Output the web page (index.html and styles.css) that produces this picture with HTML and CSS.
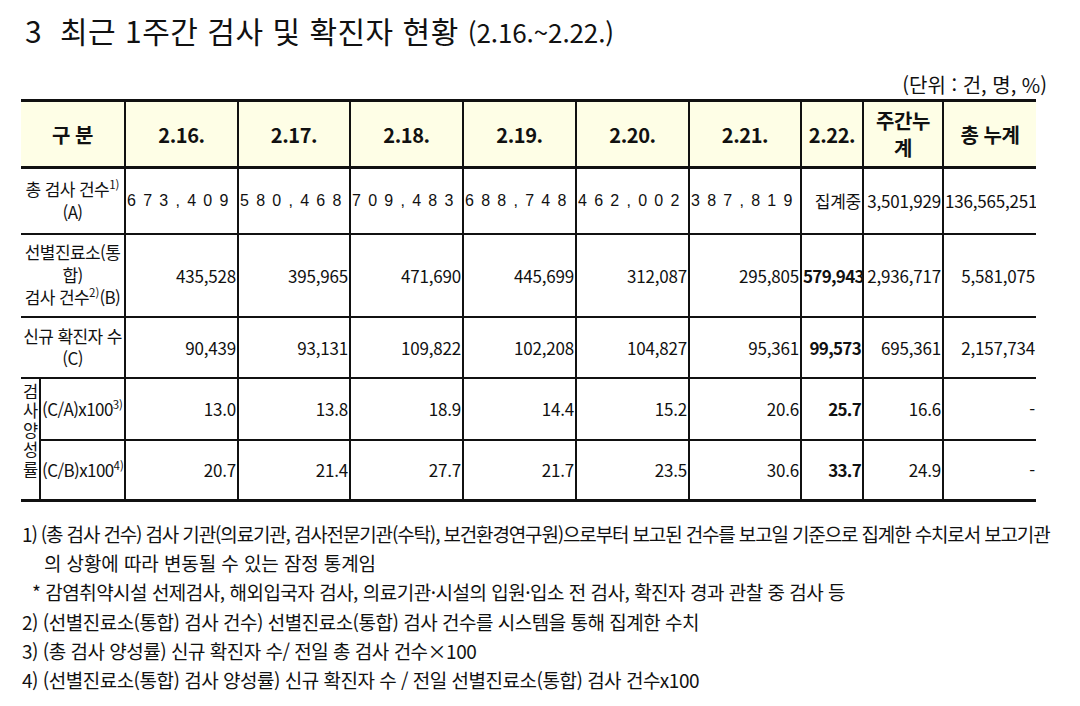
FILE: index.html
```html
<!DOCTYPE html>
<html lang="ko">
<head>
<meta charset="utf-8">
<link rel="stylesheet" href="styles.css">
</head>
<body>
<div class="page">
  <h1 class="title">3&nbsp; 최근 1주간 검사 및 확진자 현황 <span class="title-sub">(2.16.~2.22.)</span></h1>
  <div class="unit">(단위 : 건, 명, %)</div>
  <table class="stats">
    <colgroup>
      <col class="c-a"><col class="c-b"><col class="c-d"><col class="c-d2"><col class="c-d"><col class="c-d"><col class="c-d"><col class="c-d2"><col class="c-e"><col class="c-f"><col class="c-g">
    </colgroup>
    <thead>
      <tr class="r-head">
        <th colspan="2">구 분</th>
        <th>2.16.</th><th>2.17.</th><th>2.18.</th><th>2.19.</th><th>2.20.</th><th>2.21.</th><th>2.22.</th>
        <th class="wrap">주간누<br>계</th>
        <th>총 누계</th>
      </tr>
    </thead>
    <tbody>
      <tr class="r1">
        <td colspan="2" class="label">총 검사 건수<sup>1)</sup><br>(A)</td>
        <td class="spread">6 7 3 , 4 0 9</td>
        <td class="spread">5 8 0 , 4 6 8</td>
        <td class="spread">7 0 9 , 4 8 3</td>
        <td class="spread">6 8 8 , 7 4 8</td>
        <td class="spread">4 6 2 , 0 0 2</td>
        <td class="spread">3 8 7 , 8 1 9</td>
        <td class="num">집계중</td>
        <td class="num">3,501,929</td>
        <td class="num">136,565,251</td>
      </tr>
      <tr class="r2">
        <td colspan="2" class="label">선별진료소(통<br>합)<br>검사 건수<sup>2)</sup>(B)</td>
        <td class="num">435,528</td>
        <td class="num">395,965</td>
        <td class="num">471,690</td>
        <td class="num">445,699</td>
        <td class="num">312,087</td>
        <td class="num">295,805</td>
        <td class="num bold">579,943</td>
        <td class="num">2,936,717</td>
        <td class="num">5,581,075</td>
      </tr>
      <tr class="r3">
        <td colspan="2" class="label">신규 확진자 수<br>(C)</td>
        <td class="num">90,439</td>
        <td class="num">93,131</td>
        <td class="num">109,822</td>
        <td class="num">102,208</td>
        <td class="num">104,827</td>
        <td class="num">95,361</td>
        <td class="num bold">99,573</td>
        <td class="num">695,361</td>
        <td class="num">2,157,734</td>
      </tr>
      <tr class="r4">
        <td rowspan="2" class="vlabel"><span class="vtext">검사양성률</span></td>
        <td class="sub">(C/A)x100<sup>3)</sup></td>
        <td class="num">13.0</td>
        <td class="num">13.8</td>
        <td class="num">18.9</td>
        <td class="num">14.4</td>
        <td class="num">15.2</td>
        <td class="num">20.6</td>
        <td class="num bold">25.7</td>
        <td class="num">16.6</td>
        <td class="num">-</td>
      </tr>
      <tr class="r5">
        <td class="sub">(C/B)x100<sup>4)</sup></td>
        <td class="num">20.7</td>
        <td class="num">21.4</td>
        <td class="num">27.7</td>
        <td class="num">21.7</td>
        <td class="num">23.5</td>
        <td class="num">30.6</td>
        <td class="num bold">33.7</td>
        <td class="num">24.9</td>
        <td class="num">-</td>
      </tr>
    </tbody>
  </table>
  <ol class="notes">
    <li class="tight">1) (총 검사 건수) 검사 기관(의료기관, 검사전문기관(수탁), 보건환경연구원)으로부터 보고된 건수를 보고일 기준으로 집계한 수치로서 보고기관</li>
    <li class="indent">의 상황에 따라 변동될 수 있는 잠정 통계임</li>
    <li class="star">* 감염취약시설 선제검사, 해외입국자 검사, 의료기관·시설의 입원·입소 전 검사, 확진자 경과 관찰 중 검사 등</li>
    <li>2) (선별진료소(통합) 검사 건수) 선별진료소(통합) 검사 건수를 시스템을 통해 집계한 수치</li>
    <li>3) (총 검사 양성률) 신규 확진자 수/ 전일 총 검사 건수×100</li>
    <li>4) (선별진료소(통합) 검사 양성률) 신규 확진자 수 / 전일 선별진료소(통합) 검사 건수x100</li>
  </ol>
</div>
</body>
</html>
```
FILE: styles.css
```css
* { box-sizing: border-box; }
html, body { margin: 0; padding: 0; background: #fff; }
body {
  font-family: "Noto Sans CJK KR", "Noto Sans", sans-serif;
  color: #111;
}
.page {
  width: 1080px;
  height: 706px;
  padding: 11px 0 0 21px;
  overflow: hidden;
}
.title {
  margin: 0 0 0 4px;
  font-size: 30px;
  font-weight: 400;
  line-height: 38px;
  letter-spacing: 0.5px;
}
.title-sub { font-size: 26px; letter-spacing: -0.1px; }
.unit {
  width: 1026px;
  text-align: right;
  font-size: 20px;
  line-height: 28px;
  margin-top: 20px;
  letter-spacing: 0;
}
.stats {
  width: 1015px;
  table-layout: fixed;
  border-collapse: collapse;
  margin-top: 0;
  font-size: 17px;
}
.c-a { width: 19px; }
.c-b { width: 85px; }
.c-d { width: 113px; }
.c-d2 { width: 112px; }
.c-e { width: 62px; }
.c-f { width: 80px; }
.c-g { width: 93px; }
.stats th, .stats td {
  border: 2px solid #111;
  padding: 0 1px;
  overflow: hidden;
  white-space: nowrap;
}
.stats tr > :first-child { border-left: none; }
.stats tr > :last-child { border-right: none; }
.stats .r5 > :first-child { border-left: 2px solid #111; }
.stats thead th {
  background: #fefee6;
  font-size: 20px;
  font-weight: 700;
  line-height: 27px;
  border-top: 3px solid #111;
  border-bottom: 3px solid #111;
  letter-spacing: -0.4px;
}
.r-head { height: 67px; }
.r1 { height: 66px; }
.r2 { height: 83px; }
.r3 { height: 61px; }
.r4 { height: 62px; }
.r5 { height: 61px; }
.r5 td, .r4 .vlabel { border-bottom: 3px solid #111; }
.label {
  text-align: center;
  font-size: 17px;
  line-height: 22.5px;
  letter-spacing: -0.6px;
}
.label sup, .sub sup { font-size: 11.5px; line-height: 0; letter-spacing: 0; }
.spread {
  font-family: "Liberation Sans", sans-serif;
  font-size: 16px;
  letter-spacing: 1.4px;
  padding-left: 2px;
  text-align: left;
  vertical-align: middle;
}
.num {
  text-align: right;
  font-size: 17px;
  letter-spacing: -0.2px;
  padding-right: 1px;
}
.bold { font-weight: 700; letter-spacing: -0.7px; }
.stats .vlabel {
  text-align: center;
  vertical-align: top;
  padding: 4px 0 0;
  overflow: visible;
}
.vtext {
  display: inline-block;
  writing-mode: vertical-rl;
  text-orientation: upright;
  font-size: 16.5px;
  line-height: 17px;
  letter-spacing: 3px;
}
.sub {
  font-size: 17px;
  letter-spacing: -0.6px;
  padding-left: 1px;
  text-align: left;
}
.notes {
  list-style: none;
  margin: 17px 0 0 1px;
  padding: 0;
  font-size: 19px;
  line-height: 29.2px;
  letter-spacing: -0.5px;
  white-space: nowrap;
}
.notes .tight { letter-spacing: -1.15px; }
.notes .indent { padding-left: 22px; letter-spacing: -0.1px; }
.notes .star { padding-left: 10px; }
```
